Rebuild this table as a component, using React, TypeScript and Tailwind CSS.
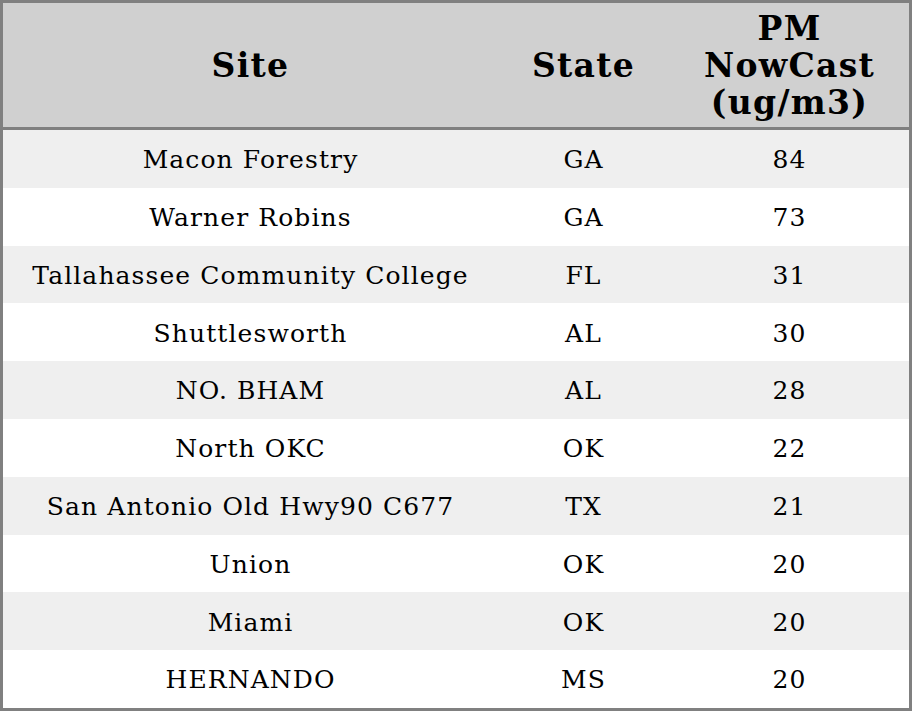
const rows: { site: string; state: string; pm: number }[] = [
  { site: "Macon Forestry", state: "GA", pm: 84 },
  { site: "Warner Robins", state: "GA", pm: 73 },
  { site: "Tallahassee Community College", state: "FL", pm: 31 },
  { site: "Shuttlesworth", state: "AL", pm: 30 },
  { site: "NO. BHAM", state: "AL", pm: 28 },
  { site: "North OKC", state: "OK", pm: 22 },
  { site: "San Antonio Old Hwy90 C677", state: "TX", pm: 21 },
  { site: "Union", state: "OK", pm: 20 },
  { site: "Miami", state: "OK", pm: 20 },
  { site: "HERNANDO", state: "MS", pm: 20 },
]

export default function App() {
  return (
    <div
      className="w-[912px] h-[711px] border-[3px] border-[#808080] flex flex-col bg-white text-black"
      style={{ fontFamily: '"DejaVu Serif", "Liberation Serif", serif' }}
    >
      <div className="flex h-[127px] shrink-0 bg-[#d0d0d0] border-b-[3px] border-[#808080] font-bold text-[33px] leading-[37px] tracking-[1.3px]">
        <div className="w-[494px] flex items-center justify-center text-center pl-[1px] pt-[1px]">Site</div>
        <div className="w-[172px] flex items-center justify-center text-center pl-[1px] pt-[1px]">State</div>
        <div className="flex-1 flex items-center justify-center text-center pl-[1px] pt-[1px]">
          PM<br />NowCast<br />(ug/m3)
        </div>
      </div>
      <div className="flex-1 flex flex-col text-[25px] tracking-[1.1px]">
        {rows.map((r, i) => (
          <div key={i} className={"flex flex-1 items-center pt-[2px] " + (i % 2 === 0 ? "bg-[#efefef]" : "bg-white")}>
            <div className="w-[494px] text-center pl-[1px]">{r.site}</div>
            <div className="w-[172px] text-center pl-[1px]">{r.state}</div>
            <div className="flex-1 text-center pl-[1px]">{r.pm}</div>
          </div>
        ))}
      </div>
    </div>
  )
}
